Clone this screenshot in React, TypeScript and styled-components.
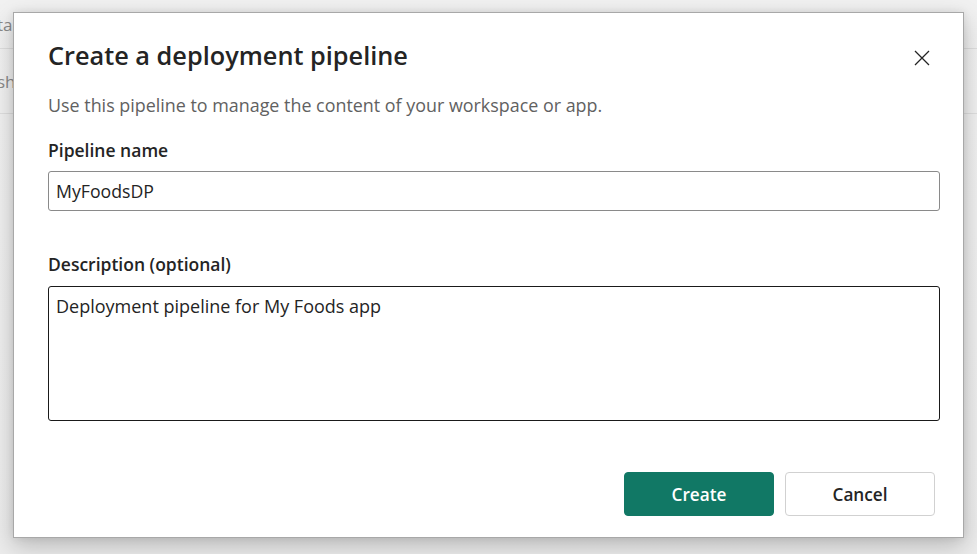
import React from "react";
import styled, { createGlobalStyle } from "styled-components";

const Global = createGlobalStyle`
  html, body { margin: 0; padding: 0; }
  body {
    width: 977px;
    height: 554px;
    overflow: hidden;
    font-family: "Open Sans", "Noto Sans", "Liberation Sans", sans-serif;
    background: #eeeeee;
  }
`;

const Page = styled.div`
  position: relative;
  width: 977px;
  height: 554px;
  overflow: hidden;
  background: linear-gradient(180deg, #f1f1f1 0%, #ececec 100%);
`;

const BgRow = styled.div<{ $h: number }>`
  height: ${(p) => p.$h}px;
  border-bottom: 1px solid #dedede;
  display: flex;
  align-items: center;
  color: #8a8a8a;
  font-size: 17px;
  margin-left: -3px;
`;

const Dialog = styled.div`
  position: absolute;
  left: 13px;
  top: 12px;
  width: 949px;
  height: 524px;
  background: #ffffff;
  border: 1px solid #a8a8a8;
  box-shadow: 0 8px 22px rgba(0, 0, 0, 0.22), 0 0 8px rgba(0, 0, 0, 0.08);
  display: flex;
  flex-direction: column;
`;

const Inner = styled.div`
  padding: 26px 22px 21px 34px;
  display: flex;
  flex-direction: column;
  height: 100%;
  box-sizing: border-box;
`;

const Header = styled.div`
  display: flex;
  justify-content: space-between;
  align-items: flex-start;
`;

const Title = styled.h1`
  margin: 0;
  font-size: 25.3px;
  font-weight: 600;
  color: #242424;
  line-height: 32px;
`;

const CloseButton = styled.button`
  border: none;
  background: transparent;
  padding: 0;
  margin: 11px 11px 0 0;
  width: 16px;
  height: 16px;
  display: flex;
  cursor: pointer;
`;

const Subtitle = styled.p`
  margin: 23px 0 0 0;
  font-size: 17.9px;
  line-height: 22px;
  color: #616161;
`;

const Label = styled.label<{ $mt: number }>`
  display: block;
  margin-top: ${(p) => p.$mt}px;
  font-size: 17.5px;
  font-weight: 600;
  line-height: 22px;
  color: #242424;
`;

const Field = styled.div<{ $h: number; $focused?: boolean }>`
  margin-top: ${(p) => (p.$focused ? 11 : 10)}px;
  width: 892px;
  height: ${(p) => p.$h}px;
  box-sizing: border-box;
  border: 1px solid ${(p) => (p.$focused ? "#1a1a1a" : "#8a8a8a")};
  border-radius: 3px;
  padding: 8px 7px;
  font-size: ${(p) => (p.$focused ? 18 : 17.7)}px;
  line-height: 22px;
  color: #242424;
`;

const Footer = styled.div`
  margin-top: auto;
  display: flex;
  justify-content: flex-end;
  gap: 11px;
  padding-right: 6px;
`;

const Button = styled.button<{ $primary?: boolean }>`
  width: 150px;
  height: 44px;
  border-radius: 4px;
  font-family: inherit;
  font-size: 17.2px;
  font-weight: 600;
  cursor: pointer;
  border: 1px solid ${(p) => (p.$primary ? "#117865" : "#d1d1d1")};
  background: ${(p) => (p.$primary ? "#117865" : "#ffffff")};
  color: ${(p) => (p.$primary ? "#ffffff" : "#242424")};
`;

export default function App() {
  return (
    <>
      <Global />
      <Page>
        <BgRow $h={48}>ta</BgRow>
        <BgRow $h={64}>sh</BgRow>
        <Dialog role="dialog">
          <Inner>
            <Header>
              <Title>Create a deployment pipeline</Title>
              <CloseButton aria-label="Close">
                <svg width="16" height="16" viewBox="0 0 16 16">
                  <path d="M1 1 L15 15 M15 1 L1 15" stroke="#242424" strokeWidth="1.3" fill="none" />
                </svg>
              </CloseButton>
            </Header>
            <Subtitle>Use this pipeline to manage the content of your workspace or app.</Subtitle>
            <Label $mt={23}>Pipeline name</Label>
            <Field $h={40}>MyFoodsDP</Field>
            <Label $mt={42}>Description (optional)</Label>
            <Field $h={135} $focused>Deployment pipeline for My Foods app</Field>
            <Footer>
              <Button $primary>Create</Button>
              <Button>Cancel</Button>
            </Footer>
          </Inner>
        </Dialog>
      </Page>
    </>
  );
}
